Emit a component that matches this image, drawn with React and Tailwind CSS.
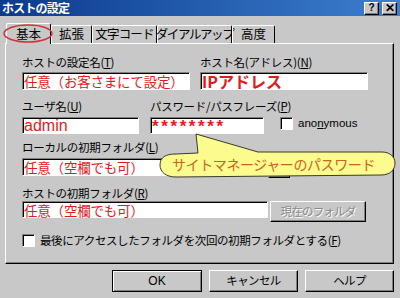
import React from "react";

const inputCls =
  "bg-white border border-t-[#808080] border-l-[#808080] border-b-white border-r-white shadow-[inset_1px_1px_0_#000] whitespace-nowrap";
const raised =
  "bg-[#c8c8c8] border border-t-white border-l-white border-b-black border-r-black shadow-[inset_-1px_-1px_0_#808080]";
const label = "text-[11.5px] leading-[14px] h-[14px] tracking-[-0.3px] whitespace-nowrap";
const redText = "text-[#e01c1c] text-[13.5px] leading-[16px] pl-[1px] tracking-[-0.2px]";
const tab =
  "h-[18px] border-t border-l border-t-white border-l-white border-r border-r-black rounded-t-[2px] flex items-center justify-center text-[12.5px] leading-none whitespace-nowrap";

function Check() {
  return (
    <div className="w-[13px] h-[13px] bg-white border border-t-[#808080] border-l-[#808080] border-b-white border-r-white shadow-[inset_1px_1px_0_#000]" />
  );
}

export default function App() {
  return (
    <div className="relative w-[400px] h-[298px] overflow-hidden bg-[#c8c8c8] font-['Noto_Sans_CJK_JP',sans-serif] text-black">
      {/* title bar */}
      <div className="h-[16px] flex items-center justify-between bg-linear-to-r from-[#0c3a8c] to-[#3d7fd0] pl-[2px] pr-[3px]">
        <span className="text-white text-[12px] leading-none font-bold tracking-[-0.8px]">ホストの設定</span>
        <div className="flex gap-[3px]">
          <div className={`${raised} w-[15px] h-[13px] flex items-center justify-center text-[10px] font-bold leading-none font-['Liberation_Sans',sans-serif]`}>?</div>
          <div className={`${raised} w-[15px] h-[13px] flex items-center justify-center text-[12px] font-bold leading-none font-['Liberation_Sans',sans-serif]`}>✕</div>
        </div>
      </div>

      {/* tabs */}
      <div className="mt-[7px] pl-[6px] flex items-end h-[20px] relative z-10">
        <div className="w-[45px] h-[21px] -mb-[1px] bg-[#c8c8c8] border-t border-l border-t-white border-l-white border-r border-r-black rounded-t-[2px] flex items-center justify-center text-[12.5px] leading-none">基本</div>
        <div className={`${tab} w-[41px]`}>拡張</div>
        <div className={`${tab} w-[65px] tracking-[-0.8px]`}>文字コード</div>
        <div className={`${tab} w-[75px] tracking-[-1.4px]`}>ダイアルアップ</div>
        <div className={`${tab} w-[43px]`}>高度</div>
      </div>

      {/* panel */}
      <div className="ml-[5px] w-[389px] h-[221px] border border-t-white border-l-white border-b-black border-r-black shadow-[inset_-1px_-1px_0_#808080] pl-[16px] pt-[11px]">
        {/* row 1 */}
        <div className="flex gap-[10px]">
          <div className="w-[168px]">
            <div className={label}>ホストの設定名(<span className="underline">T</span>)</div>
            <div className={`${inputCls} mt-[3px] h-[18px] flex items-center`}>
              <span className={redText}>任意（お客さまにて設定）</span>
            </div>
          </div>
          <div className="w-[168px]">
            <div className={label}>ホスト名(アドレス)(<span className="underline">N</span>)</div>
            <div className={`${inputCls} mt-[3px] h-[18px] flex items-center`}>
              <span className="text-[#e01c1c] text-[16px] leading-[16px] font-bold pl-[1px]">IPアドレス</span>
            </div>
          </div>
        </div>

        {/* row 2 */}
        <div className="flex items-start mt-[9px]">
          <div className="w-[117px]">
            <div className={label}>ユーザ名(<span className="underline">U</span>)</div>
            <div className={`${inputCls} mt-[4px] h-[17px] flex items-center`}>
              <span className="text-[#e01c1c] text-[16px] leading-[15px] pl-[1px] font-['Liberation_Sans',sans-serif]">admin</span>
            </div>
          </div>
          <div className="w-[114px] ml-[11px]">
            <div className={label}>パスワード/パスフレーズ(<span className="underline">P</span>)</div>
            <div className={`${inputCls} mt-[4px] h-[17px] flex items-start`}>
              <span className="text-[#e01c1c] text-[17px] leading-[13px] font-bold pl-[1px] pt-[2px] tracking-[2.6px] font-['Liberation_Sans',sans-serif]">********</span>
            </div>
          </div>
          <div className="ml-[16px] mt-[18px] flex items-center gap-[5px]">
            <Check />
            <span className="text-[11.5px] leading-[13px] font-['Liberation_Sans',sans-serif]">
              ano<span className="underline">n</span>ymous
            </span>
          </div>
        </div>

        {/* row 3 */}
        <div className="mt-[6px]">
          <div className={label}>ローカルの初期フォルダ(<span className="underline">L</span>)</div>
          <div className="flex items-start mt-[4px]">
            <div className={`${inputCls} w-[244px] h-[18px] flex items-center`}>
              <span className={redText}>任意（空欄でも可）</span>
            </div>
            <div className={`${raised} ml-[2px] w-[22px] h-[20px]`} />
          </div>
        </div>

        {/* row 4 */}
        <div className="mt-[8px]">
          <div className={label}>ホストの初期フォルダ(<span className="underline">R</span>)</div>
          <div className="flex items-start mt-[1px]">
            <div className={`${inputCls} w-[246px] h-[17px] flex items-center`}>
              <span className={redText}>任意（空欄でも可）</span>
            </div>
            <div className={`${raised} ml-[2px] w-[96px] h-[21px] flex items-center justify-center text-[11.5px] leading-none tracking-[-0.8px] text-[#8a8a8a] [text-shadow:1px_1px_0_#fff]`}>
              現在のフォルダ
            </div>
          </div>
        </div>

        {/* row 5 */}
        <div className="mt-[11px] flex items-center gap-[5px]">
          <Check />
          <span className="text-[11.5px] leading-[14px] tracking-[-0.4px] whitespace-nowrap">
            最後にアクセスしたフォルダを次回の初期フォルダとする(<span className="underline">F</span>)
          </span>
        </div>
      </div>

      {/* bottom buttons */}
      <div className="mt-[6px] flex justify-end gap-[7px] pr-[6px]">
        <div className="w-[90px] h-[22px] bg-[#c8c8c8] border border-black shadow-[inset_1px_1px_0_#fff,inset_-1px_-1px_0_#808080] flex items-center justify-center text-[12px] leading-none font-['Liberation_Sans',sans-serif]">OK</div>
        <div className={`${raised} w-[89px] h-[22px] flex items-center justify-center text-[11.5px] leading-none tracking-[-0.6px]`}>キャンセル</div>
        <div className={`${raised} w-[89px] h-[22px] flex items-center justify-center text-[11.5px] leading-none tracking-[-0.6px]`}>ヘルプ</div>
      </div>

      {/* annotations overlay */}
      <svg className="absolute left-0 top-0 pointer-events-none z-20" width="400" height="298" viewBox="0 0 400 298">
        <ellipse cx="28" cy="33.5" rx="24" ry="8.5" fill="none" stroke="#d0343a" strokeWidth="1.5" />
        <path
          d="M160,165 C160,157 166,154 176,154 L198,153 L196,134 L258,152 L382,152 C390,152 395,157 395,163 C395,170 390,175 381,175 L176,177 C166,177 160,172 160,165 Z"
          fill="#fbfb8e"
          stroke="#3a3a2a"
          strokeWidth="1"
        />
      </svg>
      <div className="absolute left-[172px] top-[155px] z-30 text-[14px] leading-[18px] text-[#c8641e] tracking-[-0.4px] whitespace-nowrap">
        サイトマネージャーのパスワード
      </div>
    </div>
  );
}
